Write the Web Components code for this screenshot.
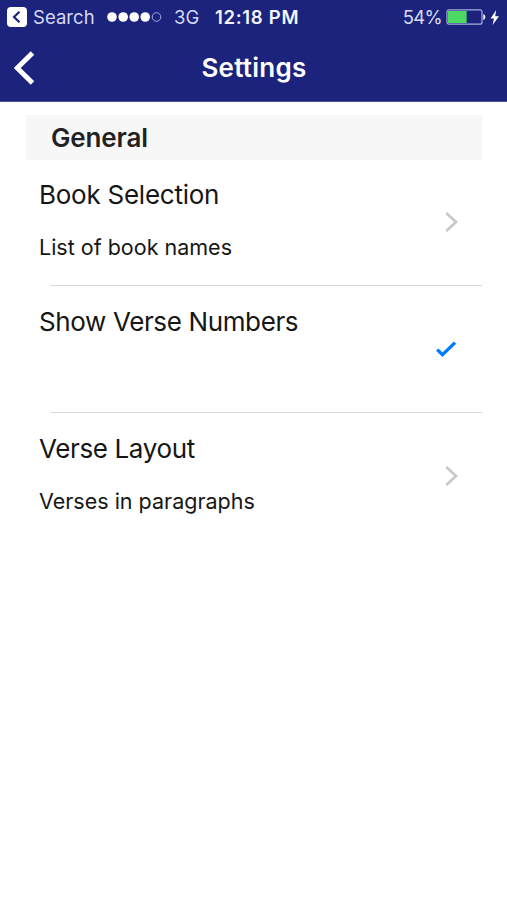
<!DOCTYPE html>
<html lang="en">
<head>
<meta charset="utf-8">
<title>Settings</title>
<style>
  body {
    margin: 0;
    background: #fff;
    color: #161616;
    font-family: Inter, "Liberation Sans", sans-serif;
  }
</style>
</head>
<body>
<settings-screen>
  <status-bar slot="top" back="Search" network="3G" time="12:18 PM" battery="54"></status-bar>
  <nav-bar slot="top">Settings</nav-bar>

  <settings-group>
    <span slot="title">General</span>
    <settings-row icon="chevron" style="--title-spacing: -0.25px">
      Book Selection
      <span slot="detail">List of book names</span>
    </settings-row>
    <settings-row icon="check">Show Verse Numbers</settings-row>
    <settings-row icon="chevron">
      Verse Layout
      <span slot="detail">Verses in paragraphs</span>
    </settings-row>
  </settings-group>
</settings-screen>

<script>
class SettingsScreen extends HTMLElement {
  constructor() {
    super();
    this.attachShadow({mode: 'open'});
    this.shadowRoot.innerHTML = /* html */ `
    <style>
      :host {
        display: block;
        min-height: 900px;
      }
      header {
        box-sizing: border-box;
        height: 102px;
        background: #1b237c;
        border-bottom: 1px solid #4a4f9c;
        color: #fff;
      }
      main {
        padding: 13px 25px 0 26px;
      }
    </style>
    <header><slot name="top"></slot></header>
    <main><slot></slot></main>
    `;
  }
}
customElements.define('settings-screen', SettingsScreen);

class StatusBar extends HTMLElement {
  constructor() {
    super();
    this.attachShadow({mode: 'open'});
  }

  connectedCallback() {
    const level = Number(this.getAttribute('battery'));

    this.shadowRoot.innerHTML = /* html */ `
    <style>
      :host {
        display: flex;
        align-items: center;
        height: 34px;
        padding: 0 7px;
        font-size: 18.5px;
        line-height: 34px;
        white-space: nowrap;
        color: #d6d9f5;
      }
      svg { display: block; flex: none; }
      .back { margin-left: 6px; width: 62px; letter-spacing: 0.05px; }
      .dots { margin-left: 12px; }
      .network { margin-left: 12px; width: 26px; }
      .time {
        margin-left: 15px;
        font-weight: 600;
        letter-spacing: 0.7px;
        color: #f4f5ff;
      }
      .battery { margin-left: auto; letter-spacing: -0.7px; }
      .cell { margin-left: 4px; }
      .bolt { margin-left: 4px; }
    </style>
    <svg width="20" height="20" viewBox="0 0 20 20">
      <rect width="20" height="20" rx="4" fill="#fff"/>
      <path d="M12.5 4.8 L7 10 L12.5 15.2" fill="none" stroke="#1b237c" stroke-width="2.2"/>
    </svg>
    <span class="back">${this.getAttribute('back')}</span>
    <svg class="dots" width="55" height="12" viewBox="0 0 55 12">
      <g fill="#fff">
        <circle cx="5" cy="6" r="4.8"/>
        <circle cx="16.2" cy="6" r="4.8"/>
        <circle cx="27.2" cy="6" r="4.8"/>
        <circle cx="38.2" cy="6" r="4.8"/>
      </g>
      <circle cx="49.5" cy="6" r="4.3" fill="none" stroke="#a3a8dc" stroke-width="1"/>
    </svg>
    <span class="network">${this.getAttribute('network')}</span>
    <span class="time">${this.getAttribute('time')}</span>
    <span class="battery">${level}%</span>
    <svg class="cell" width="40" height="16" viewBox="0 0 40 16">
      <rect x="1" y=".8" width="35" height="14.4" rx="2" fill="none" stroke="#a9adde" stroke-width="1.2"/>
      <rect x="2" y="2" width="${level * 0.345}" height="12" fill="#4cd964"/>
      <path d="M37.3 5 Q39.3 5.5 39.3 8 Q39.3 10.5 37.3 11 Z" fill="#fff"/>
    </svg>
    <svg class="bolt" width="10" height="15" viewBox="0 0 10 15">
      <path d="M6.2 0 L0.5 8.6 H4 L2.6 15 L9 6.2 H5.2 Z" fill="#fff"/>
    </svg>
    `;
  }
}
customElements.define('status-bar', StatusBar);

class NavBar extends HTMLElement {
  constructor() {
    super();
    this.attachShadow({mode: 'open'});
    this.shadowRoot.innerHTML = /* html */ `
    <style>
      :host {
        display: grid;
        grid-template-columns: 60px 1fr 60px;
        align-items: center;
        height: 67px;
      }
      svg { display: block; margin-left: 14px; }
      h1 {
        margin: 0;
        padding-left: 1px;
        font-size: 26px;
        line-height: 32px;
        font-weight: 600;
        letter-spacing: 0.25px;
        text-align: center;
      }
    </style>
    <svg width="22" height="34" viewBox="0 0 22 34">
      <path d="M18.5 2 L3.2 17 L18.5 32" fill="none" stroke="#fff" stroke-width="5"/>
    </svg>
    <h1><slot></slot></h1>
    `;
  }
}
customElements.define('nav-bar', NavBar);

class SettingsGroup extends HTMLElement {
  constructor() {
    super();
    this.attachShadow({mode: 'open'});
    this.shadowRoot.innerHTML = /* html */ `
    <style>
      :host { display: block; }
      h2 {
        margin: 0;
        padding-left: 25px;
        height: 45px;
        background: #f7f7f7;
        color: #222;
        font-size: 26px;
        line-height: 46px;
        font-weight: 600;
        letter-spacing: -0.15px;
      }
    </style>
    <h2><slot name="title"></slot></h2>
    <slot></slot>
    `;
  }
}
customElements.define('settings-group', SettingsGroup);

const icons = {
  chevron: /* html */ `
    <svg width="14" height="22" viewBox="0 0 14 22">
      <path d="M3.3 1 L13 10 L3.3 19" fill="none" stroke="#c7c7cc" stroke-width="2.7"/>
    </svg>`,
  check: /* html */ `
    <svg width="22" height="18" viewBox="0 0 22 18">
      <path d="M2.2 8.6 L7.5 13.6 L20 1.6" fill="none" stroke="#007aff" stroke-width="3.3"/>
    </svg>`
};

class SettingsRow extends HTMLElement {
  constructor() {
    super();
    this.attachShadow({mode: 'open'});
  }

  connectedCallback() {
    this.shadowRoot.innerHTML = /* html */ `
    <style>
      :host { display: block; }
      .row {
        display: flex;
        align-items: center;
        justify-content: space-between;
        height: 125px;
        padding: 0 25px 0 13px;
      }
      .text {
        align-self: flex-start;
        padding-top: 19px;
      }
      .title {
        font-size: 26px;
        line-height: 32px;
        letter-spacing: var(--title-spacing, -0.37px);
      }
      .detail {
        margin-top: 23px;
        font-size: 21.5px;
        line-height: 26px;
      }
      .line {
        height: 1px;
        margin: 0 0 1px 24px;
        background: #d9d9dc;
      }
      :host(:last-of-type) .line { display: none; }
      svg { display: block; overflow: visible; }
    </style>
    <div class="row">
      <div class="text">
        <div class="title"><slot></slot></div>
        <div class="detail"><slot name="detail"></slot></div>
      </div>
      ${icons[this.getAttribute('icon')] || ''}
    </div>
    <div class="line"></div>
    `;
  }
}
customElements.define('settings-row', SettingsRow);
</script>
</body>
</html>
